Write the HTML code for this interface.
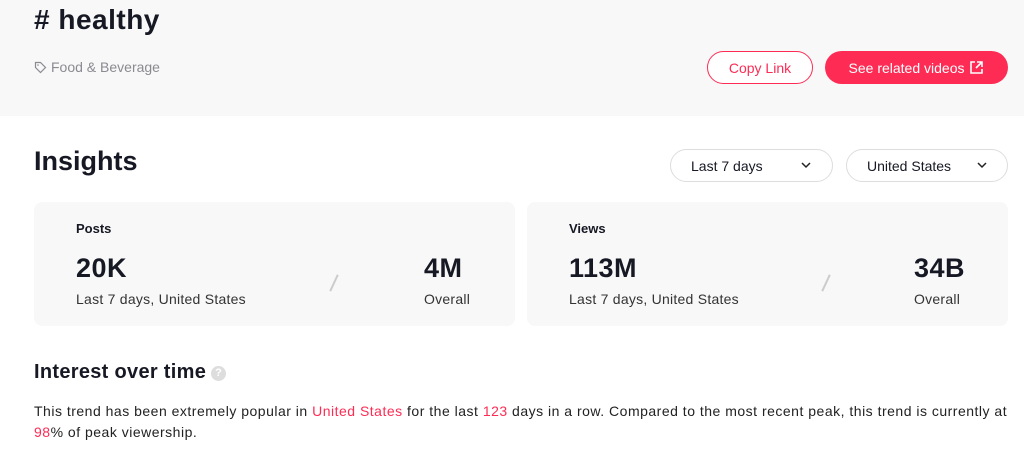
<!DOCTYPE html>
<html><head><style>
*{margin:0;padding:0;box-sizing:border-box}
body{width:1024px;height:452px;background:#fff;font-family:"Liberation Sans",sans-serif;color:#161823;position:relative;overflow:hidden}
.hdr{position:absolute;left:0;top:0;width:1024px;height:116px;background:#f8f8f8}
.abs{position:absolute;white-space:nowrap}
h1{position:absolute;left:34px;top:4px;font-size:28px;font-weight:bold;letter-spacing:0.5px}
.cat{left:34px;top:59px;font-size:14px;color:#8a8b91}
.btn{position:absolute;height:33px;border-radius:17px;font-size:14px;display:flex;align-items:center;justify-content:center}
.copy{left:707px;top:51px;width:106px;border:1px solid #fe2c55;color:#fe2c55;background:#fff}
.see{left:825px;top:51px;width:183px;background:#fe2c55;color:#fff}
.ins{left:34px;top:146px;font-size:27px;font-weight:bold}
.sel{position:absolute;top:149px;height:33px;border:1px solid #ddd;border-radius:17px;font-size:14px;padding-left:20px;display:flex;align-items:center;background:#fff}
.card{position:absolute;top:202px;height:124px;width:481px;background:#f8f8f8;border-radius:8px}
.lbl{font-size:13px;font-weight:bold;top:19px;left:42px}
.big{font-size:27px;font-weight:bold;top:51px;letter-spacing:0.5px}
.sub{font-size:14px;top:89px;color:#333;letter-spacing:0.25px}
.slash{position:absolute;top:72px;width:2px;height:18px;background:#ccc;transform:rotate(25deg)}
.h2{left:34px;top:361px;font-size:20px;font-weight:bold;letter-spacing:0.3px}
.q{position:absolute;left:211px;top:366px;width:15px;height:15px;border-radius:50%;background:#ddd;color:#fff;font-size:11px;text-align:center;line-height:15px;font-weight:bold}
.p{left:34px;top:401px;font-size:14px;line-height:21px;white-space:normal;width:980px;color:#222;letter-spacing:0.5px}
.r{color:#fe2c55}
</style></head><body>
<div class="hdr"></div>
<h1># healthy</h1>
<div class="abs cat"><svg width="13" height="13" viewBox="0 0 13 13" style="vertical-align:-2px;margin-right:4px"><path d="M1.5 1.5h5l5 5-5 5-5-5z" fill="none" stroke="#8a8b91" stroke-width="1.2"/><circle cx="4" cy="4" r="0.8" fill="#8a8b91"/></svg>Food &amp; Beverage</div>
<div class="btn copy">Copy Link</div>
<div class="btn see">See related videos <svg width="15" height="15" viewBox="0 0 15 15" style="margin-left:5px"><path d="M6 2H2v11h11V9M8 2h5v5M13 2L7 8" fill="none" stroke="#fff" stroke-width="1.6"/></svg></div>
<div class="abs ins">Insights</div>
<div class="sel" style="left:670px;width:163px">Last 7 days<svg class="abs" style="left:130px;top:12px" width="10" height="7"><path d="M1 1l4 4 4-4" fill="none" stroke="#222" stroke-width="1.5"/></svg></div>
<div class="sel" style="left:846px;width:162px">United States<svg class="abs" style="left:130px;top:12px" width="10" height="7"><path d="M1 1l4 4 4-4" fill="none" stroke="#222" stroke-width="1.5"/></svg></div>
<div class="card" style="left:34px">
<div class="abs lbl">Posts</div>
<div class="abs big" style="left:42px">20K</div>
<div class="abs sub" style="left:42px">Last 7 days, United States</div>
<div class="slash" style="left:299px"></div>
<div class="abs big" style="left:390px">4M</div>
<div class="abs sub" style="left:390px">Overall</div>
</div>
<div class="card" style="left:527px">
<div class="abs lbl">Views</div>
<div class="abs big" style="left:42px">113M</div>
<div class="abs sub" style="left:42px">Last 7 days, United States</div>
<div class="slash" style="left:298px"></div>
<div class="abs big" style="left:387px">34B</div>
<div class="abs sub" style="left:387px">Overall</div>
</div>
<div class="abs h2">Interest over time</div>
<div class="q">?</div>
<div class="abs p">This trend has been extremely popular in <span class="r">United States</span> for the last <span class="r">123</span> days in a row. Compared to the most recent peak, this trend is currently at <span class="r">98</span>% of peak viewership.</div>
</body></html>
